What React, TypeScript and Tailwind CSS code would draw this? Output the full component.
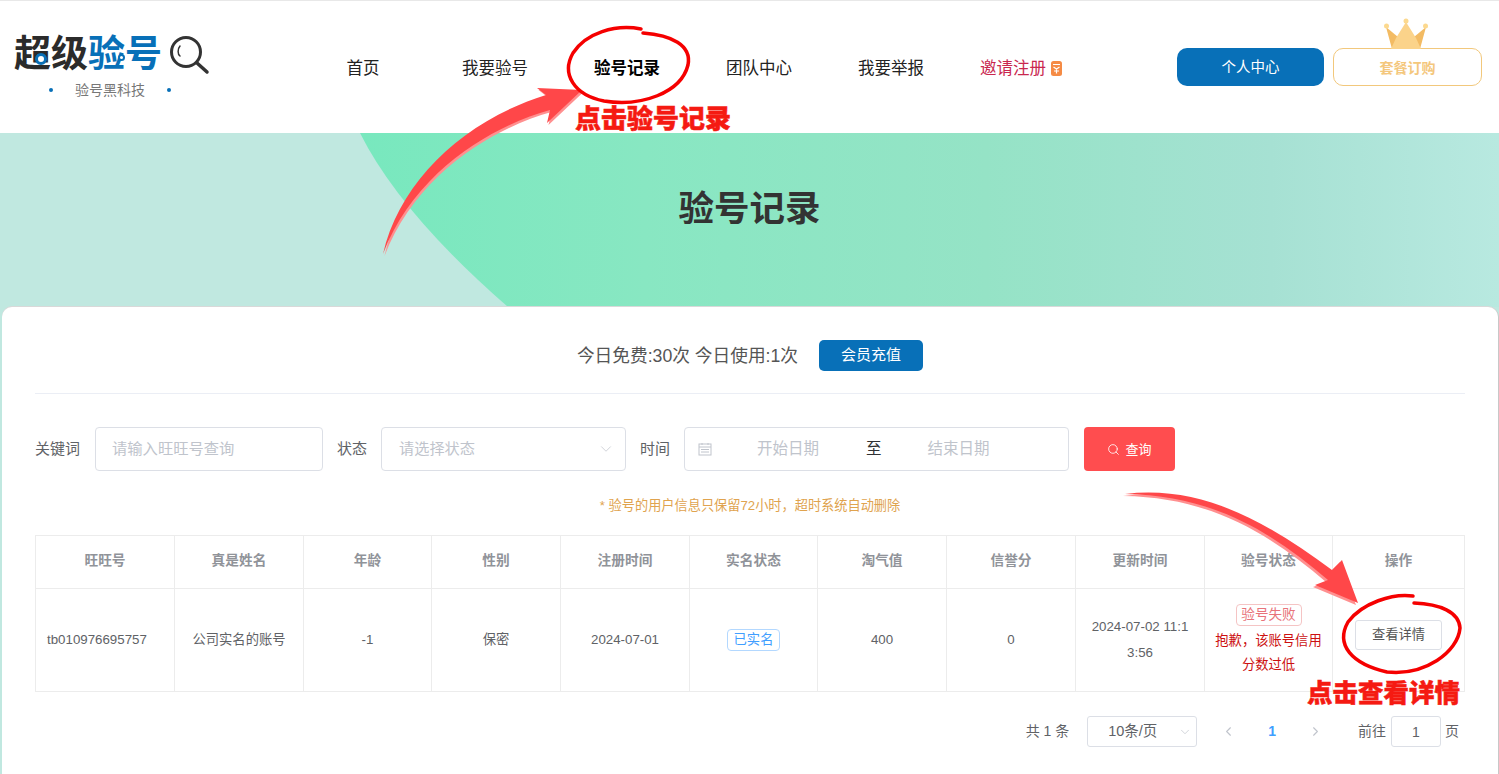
import { ChevronDown, ChevronLeft, ChevronRight, Search } from "lucide-react";

const nav = ["首页", "我要验号", "验号记录", "团队中心", "我要举报"];
const heads = ["旺旺号", "真是姓名", "年龄", "性别", "注册时间", "实名状态", "淘气值", "信誉分", "更新时间", "验号状态", "操作"];
const th = "border border-[#ececec] pb-[2px] text-center text-[13.7px] font-bold text-[#909399]";
const td = "border border-[#ececec] text-center text-[13.3px] text-[#606266] px-[11px] leading-[26px]";
const arrow1 = "M383 254 C400 180 465 120 546 95 L537 88 L582 90 L547 123 L550 110 C495 125 415 170 383 254 Z";
const arrow2 = "M1125 494 C1200 485 1265 520 1332 570 L1342 560 L1358 603 L1315 585 L1328 580 C1270 530 1210 495 1125 494 Z";

export default function App() {
  return (
    <div className="relative h-[774px] w-full overflow-hidden bg-[#c0e8e0] font-['Liberation_Sans','Noto_Sans_CJK_SC',sans-serif] text-[#303133]">
      <header className="flex h-[133px] items-center border-t border-[#e8e8e8] bg-white">
        <div className="relative h-full w-[297px] shrink-0">
          <div className="flex items-center pl-[14px] pt-[32px]">
            <span className="text-[37px] font-bold leading-[44px] text-[#2b2b2b]">超级</span>
            <span className="text-[37px] font-bold leading-[44px] text-[#0870b8]">验号</span>
            <svg className="ml-[7px]" width="42" height="40" viewBox="0 0 42 40" fill="none">
              <circle cx="17" cy="17" r="14.5" stroke="#333" strokeWidth="3" />
              <path d="M28 28 L38 37" stroke="#333" strokeWidth="3.5" strokeLinecap="round" />
              <path d="M11 11 C8.5 14 8.5 19 11 21" stroke="#333" strokeWidth="1.5" strokeLinecap="round" />
            </svg>
          </div>
          <span className="absolute left-[35px] top-[52px] size-[12px] rounded-full border-[3px] border-[#0870b8] bg-white" />
          <span className="absolute left-[118px] top-[53px] size-[7px] rounded-full border-[2px] border-[#0870b8] bg-white" />
          <div className="mt-[3px] flex items-center pl-[49px]">
            <span className="size-[4px] rounded-full bg-[#0870b8]" />
            <span className="ml-[22px] text-[14px] leading-[20px] text-[#777]">验号黑科技</span>
            <span className="ml-[22px] size-[4px] rounded-full bg-[#0870b8]" />
          </div>
        </div>
        <nav className="mt-[2px] flex">
          {nav.map((n, i) => (
            <a key={n} className={`w-[132px] text-center text-[16.5px] ${i === 2 ? "font-bold text-black" : "text-[#222]"}`}>
              {n}
            </a>
          ))}
          <a className="flex w-[132px] items-center pl-[23px] text-[16.5px] text-[#c9274f]">
            邀请注册
            <svg className="ml-[5px]" width="11" height="15" viewBox="0 0 11 15">
              <rect width="11" height="15" rx="2.5" fill="#f58b45" />
              <path d="M2 3.5 H9 M2.5 6 L5.5 8 L8.5 6 M5.5 8 V12.5 M3 10 H8" stroke="#fff" strokeWidth="1.2" fill="none" />
            </svg>
          </a>
        </nav>
        <div className="ml-[88px] flex gap-[9px]">
          <button className="h-[38px] w-[147px] rounded-[10px] bg-[#0870b8] pt-[2px] text-[14.5px] text-white">个人中心</button>
          <button className="relative h-[38px] w-[149px] rounded-[10px] border border-[#f2c87c] bg-white pt-[2px] text-[14px] font-bold text-[#f4c77c]">
            <svg className="absolute -top-[31px] left-[50px]" width="44" height="31" viewBox="0 0 44 31">
              <path d="M2 9 L8 31 H22 L14 19 Z" fill="#f3bb63" />
              <path d="M42 9 L36 31 H22 L30 19 Z" fill="#f3bb63" />
              <path d="M22 4 L12 20 L7 31 H37 L32 20 Z" fill="#fbd38a" />
              <circle cx="2.5" cy="8" r="2.5" fill="#fcd98f" />
              <circle cx="22" cy="3" r="2.5" fill="#fcd98f" />
              <circle cx="41.5" cy="8" r="2.5" fill="#fcd98f" />
            </svg>
            套餐订购
          </button>
        </div>
      </header>

      <section className="relative flex h-[174px] justify-center bg-[#c0e8e0] pt-[52px]">
        <svg className="absolute inset-0" width="1499" height="174" viewBox="0 0 1499 174">
          <defs>
            <linearGradient id="bannerGreen" x1="360" y1="0" x2="1499" y2="0" gradientUnits="userSpaceOnUse">
              <stop offset="0" stopColor="#78e8be" />
              <stop offset="0.25" stopColor="#88e7c2" />
              <stop offset="0.55" stopColor="#95e3c6" />
              <stop offset="0.8" stopColor="#a6e1d3" />
              <stop offset="1" stopColor="#b8e9e0" />
            </linearGradient>
          </defs>
          <path d="M360 0 Q400 80 508 174 L1499 174 L1499 0 Z" fill="url(#bannerGreen)" />
        </svg>
        <h1 className="relative text-[35.5px] font-bold leading-[48px] text-[#333]">验号记录</h1>
      </section>

      <main className="relative ml-[2px] mr-[1px] h-[467px] rounded-t-[10px] bg-white px-[33px] shadow-[0_-1px_0_#d9d9d9,1px_0_0_#c8c8c8]">
        <div className="flex h-[87px] items-center justify-center border-b border-[#ebeef5] pt-[11px]">
          <span className="pt-[1px] text-[17.7px] text-[#555]">今日免费:30次 今日使用:1次</span>
          <button className="ml-[21px] h-[31px] w-[104px] rounded-[5px] bg-[#0870b8] text-[15px] text-white">会员充值</button>
        </div>

        <div className="mt-[33px] flex h-[44px] items-center text-[15px] text-[#606266]">
          <label className="w-[60px]">关键词</label>
          <input
            placeholder="请输入旺旺号查询"
            className="h-full w-[228px] rounded-[4px] border border-[#dcdfe6] px-[16px] text-[15.3px] placeholder:text-[#c0c4cc]"
          />
          <label className="ml-[14px] w-[44px]">状态</label>
          <div className="flex h-full w-[245px] items-center justify-between rounded-[4px] border border-[#dcdfe6] pl-[17px] pr-[10px] text-[15.2px] text-[#c0c4cc]">
            请选择状态
            <ChevronDown size={18} strokeWidth={1} />
          </div>
          <label className="ml-[14px] w-[44px]">时间</label>
          <div className="flex h-full w-[385px] items-center rounded-[4px] border border-[#dcdfe6] text-[15.5px] text-[#c0c4cc]">
            <svg className="ml-[13px]" width="14" height="14" viewBox="0 0 14 14" fill="none" stroke="#c0c4cc">
              <rect x="1" y="2" width="12" height="11" />
              <path d="M1 5 H13 M4 1 V3 M10 1 V3 M3 7.5 H11 M3 10 H11" />
            </svg>
            <span className="ml-[45px] w-[62px] whitespace-nowrap">开始日期</span>
            <span className="ml-[47px] text-[#303133]">至</span>
            <span className="ml-[46px] w-[62px] whitespace-nowrap">结束日期</span>
          </div>
          <button className="ml-[15px] flex h-full w-[91px] items-center justify-center gap-[5px] rounded-[4px] bg-[#ff4d4f] pt-[1px] text-[13px] text-white">
            <Search size={13} strokeWidth={1.5} />
            查询
          </button>
        </div>

        <p className="mt-[26px] text-center text-[13.2px] leading-[18px] text-[#e0a34e]">* 验号的用户信息只保留72小时，超时系统自动删除</p>

        <table className="mt-[20px] w-[1429px] table-fixed border-collapse">
          <colgroup>
            <col className="w-[139px]" />
            <col className="w-[129px]" />
            <col className="w-[128px]" />
            <col className="w-[129px]" />
            <col className="w-[129px]" />
            <col className="w-[128px]" />
            <col className="w-[129px]" />
            <col className="w-[129px]" />
            <col className="w-[129px]" />
            <col className="w-[128px]" />
            <col className="w-[132px]" />
          </colgroup>
          <thead>
            <tr className="h-[53px]">
              {heads.map((h) => (
                <th key={h} className={th}>
                  {h}
                </th>
              ))}
            </tr>
          </thead>
          <tbody>
            <tr className="h-[103px]">
              <td className={`${td} !text-left`}>tb010976695757</td>
              <td className={td}>公司实名的账号</td>
              <td className={td}>-1</td>
              <td className={td}>保密</td>
              <td className={td}>2024-07-01</td>
              <td className={td}>
                <span className="inline-block h-[22px] w-[53px] rounded-[4px] border border-[#b3d8ff] text-center leading-[20px] text-[#409eff]">已实名</span>
              </td>
              <td className={td}>400</td>
              <td className={td}>0</td>
              <td className={`${td} break-all !px-[15px]`}>2024-07-02 11:13:56</td>
              <td className={`${td} !px-[9px] !leading-[24px]`}>
                <span className="inline-block h-[22px] w-[66px] rounded-[4px] border border-[#f5c4c4] text-center text-[13.6px] leading-[20px] text-[#e8737a]">验号失败</span>
                <div className="mt-[2px] text-[#cc1010]">抱歉，该账号信用分数过低</div>
              </td>
              <td className={td}>
                <button className="mb-[10px] h-[30px] w-[87px] rounded-[3px] border border-[#dcdfe6] bg-white text-[13.3px] text-[#555]">查看详情</button>
              </td>
            </tr>
          </tbody>
        </table>

        <div className="mt-[24px] flex h-[31px] items-center justify-end pr-[6px] text-[14px] text-[#606266]">
          <span>共 1 条</span>
          <div className="ml-[18px] flex h-full w-[110px] items-center justify-between rounded-[3px] border border-[#dcdfe6] pl-[20px] pr-[4px] text-[14.5px]">
            10条/页
            <ChevronDown size={14} strokeWidth={1.2} className="text-[#c0c4cc]" />
          </div>
          <ChevronLeft size={15} strokeWidth={1.8} className="ml-[24px] text-[#c0c4cc]" />
          <span className="ml-[32px] font-bold text-[#409eff]">1</span>
          <ChevronRight size={15} strokeWidth={1.8} className="ml-[32px] text-[#c0c4cc]" />
          <span className="ml-[35px]">前往</span>
          <input
            defaultValue="1"
            className="ml-[5px] h-full w-[50px] rounded-[3px] border border-[#dcdfe6] text-center text-[14px] text-[#606266]"
          />
          <span className="ml-[4px]">页</span>
        </div>
      </main>

      <svg className="pointer-events-none absolute left-0 top-0" width="1499" height="774" viewBox="0 0 1499 774" fill="none">
        <path d={arrow1} fill="#ff9090" transform="translate(1.5 2)" />
        <path d={arrow1} fill="#ff4749" />
        <path d={arrow2} fill="#ff9090" transform="translate(-2 2)" />
        <path d={arrow2} fill="#ff4749" />
        <path d="M641 29 C615 24 586 33 573 53 C561 74 574 95 604 101 C641 107 681 93 688 65 C692 45 671 35 643 33" stroke="#f50000" strokeWidth="3.5" strokeLinecap="round" />
        <path d="M1413 596 C1393 593 1362 603 1348 622 C1335 645 1352 664 1387 672 C1425 676 1458 652 1460 628 C1459 612 1440 604 1414 603" stroke="#f50000" strokeWidth="3.5" strokeLinecap="round" />
      </svg>
      <span className="absolute left-[575px] top-[101px] whitespace-nowrap text-[26px] font-black leading-[36px] text-[#f51a12] [-webkit-text-stroke:0.5px_#f51a12]">点击验号记录</span>
      <span className="absolute left-[1307px] top-[675px] whitespace-nowrap text-[25.5px] font-black leading-[36px] text-[#f51a12] [-webkit-text-stroke:0.5px_#f51a12]">点击查看详情</span>
    </div>
  );
}
